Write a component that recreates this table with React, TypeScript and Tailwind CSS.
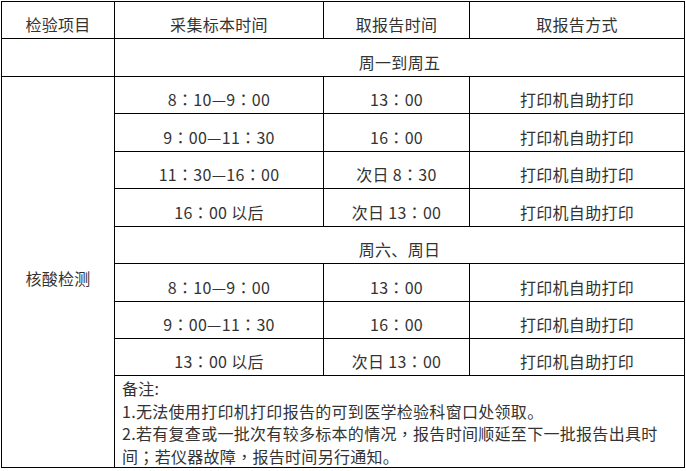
import React from 'react';

interface Slot {
  take: string;
  ready: string;
  how: string;
}

const weekdays: Slot[] = [
  { take: '8：10—9：00', ready: '13：00', how: '打印机自助打印' },
  { take: '9：00—11：30', ready: '16：00', how: '打印机自助打印' },
  { take: '11：30—16：00', ready: '次日 8：30', how: '打印机自助打印' },
  { take: '16：00 以后', ready: '次日 13：00', how: '打印机自助打印' },
];

const weekend: Slot[] = [
  { take: '8：10—9：00', ready: '13：00', how: '打印机自助打印' },
  { take: '9：00—11：30', ready: '16：00', how: '打印机自助打印' },
  { take: '13：00 以后', ready: '次日 13：00', how: '打印机自助打印' },
];

const notes = [
  '备注:',
  '1.无法使用打印机打印报告的可到医学检验科窗口处领取。',
  '2.若有复查或一批次有较多标本的情况，报告时间顺延至下一批报告出具时',
  '间；若仪器故障，报告时间另行通知。',
];

// 全角标点居中显示（繁体字形里 ，；： 都在格子中间）
function Txt({ text }: { text: string }) {
  const parts = text.split(/([，；：])/);
  return (
    <>
      {parts.map((p, i) =>
        /^[，；：]$/.test(p) ? (
          <span key={i} className="font-['Noto_Sans_CJK_TC',sans-serif]">
            {p}
          </span>
        ) : (
          <React.Fragment key={i}>{p}</React.Fragment>
        )
      )}
    </>
  );
}

const cell = 'bg-white flex items-center justify-center pt-[9px] whitespace-nowrap';

function SlotRow({ slot }: { slot: Slot }) {
  return (
    <>
      <div className={cell}>
        <Txt text={slot.take} />
      </div>
      <div className={cell}>
        <Txt text={slot.ready} />
      </div>
      <div className={cell}>{slot.how}</div>
    </>
  );
}

export default function App() {
  return (
    <div className="bg-white w-[686px] h-[471px] pt-px pl-px text-[16px] leading-[23px] tracking-[0.3px] text-[#333] font-['Noto_Sans_CJK_SC','Liberation_Sans',sans-serif]">
      <div className="grid w-fit grid-cols-[112px_208px_145px_214px] grid-rows-[36px_37px_36px_37px_36px_37px_36px_37px_36px_36px_91px] gap-px bg-black p-px">
        {/* 表头 */}
        <div className={cell}>检验项目</div>
        <div className={cell}>采集标本时间</div>
        <div className={cell}>取报告时间</div>
        <div className={cell}>取报告方式</div>

        <div className="bg-white" />
        <div className={`${cell} col-span-3`}>周一到周五</div>

        <div className="bg-white row-span-9 flex items-center justify-center pt-3">核酸检测</div>
        {weekdays.map((s, i) => (
          <SlotRow key={'wd' + i} slot={s} />
        ))}

        <div className={`${cell} col-span-3`}>周六、周日</div>
        {weekend.map((s, i) => (
          <SlotRow key={'we' + i} slot={s} />
        ))}

        {/* 备注 */}
        <div className="bg-white col-span-3 flex flex-col pl-[7px] pt-px">
          {notes.map((line, i) => (
            <div key={i} className="h-[24px] leading-[22px] whitespace-nowrap overflow-visible">
              <Txt text={line} />
            </div>
          ))}
        </div>
      </div>
    </div>
  );
}
